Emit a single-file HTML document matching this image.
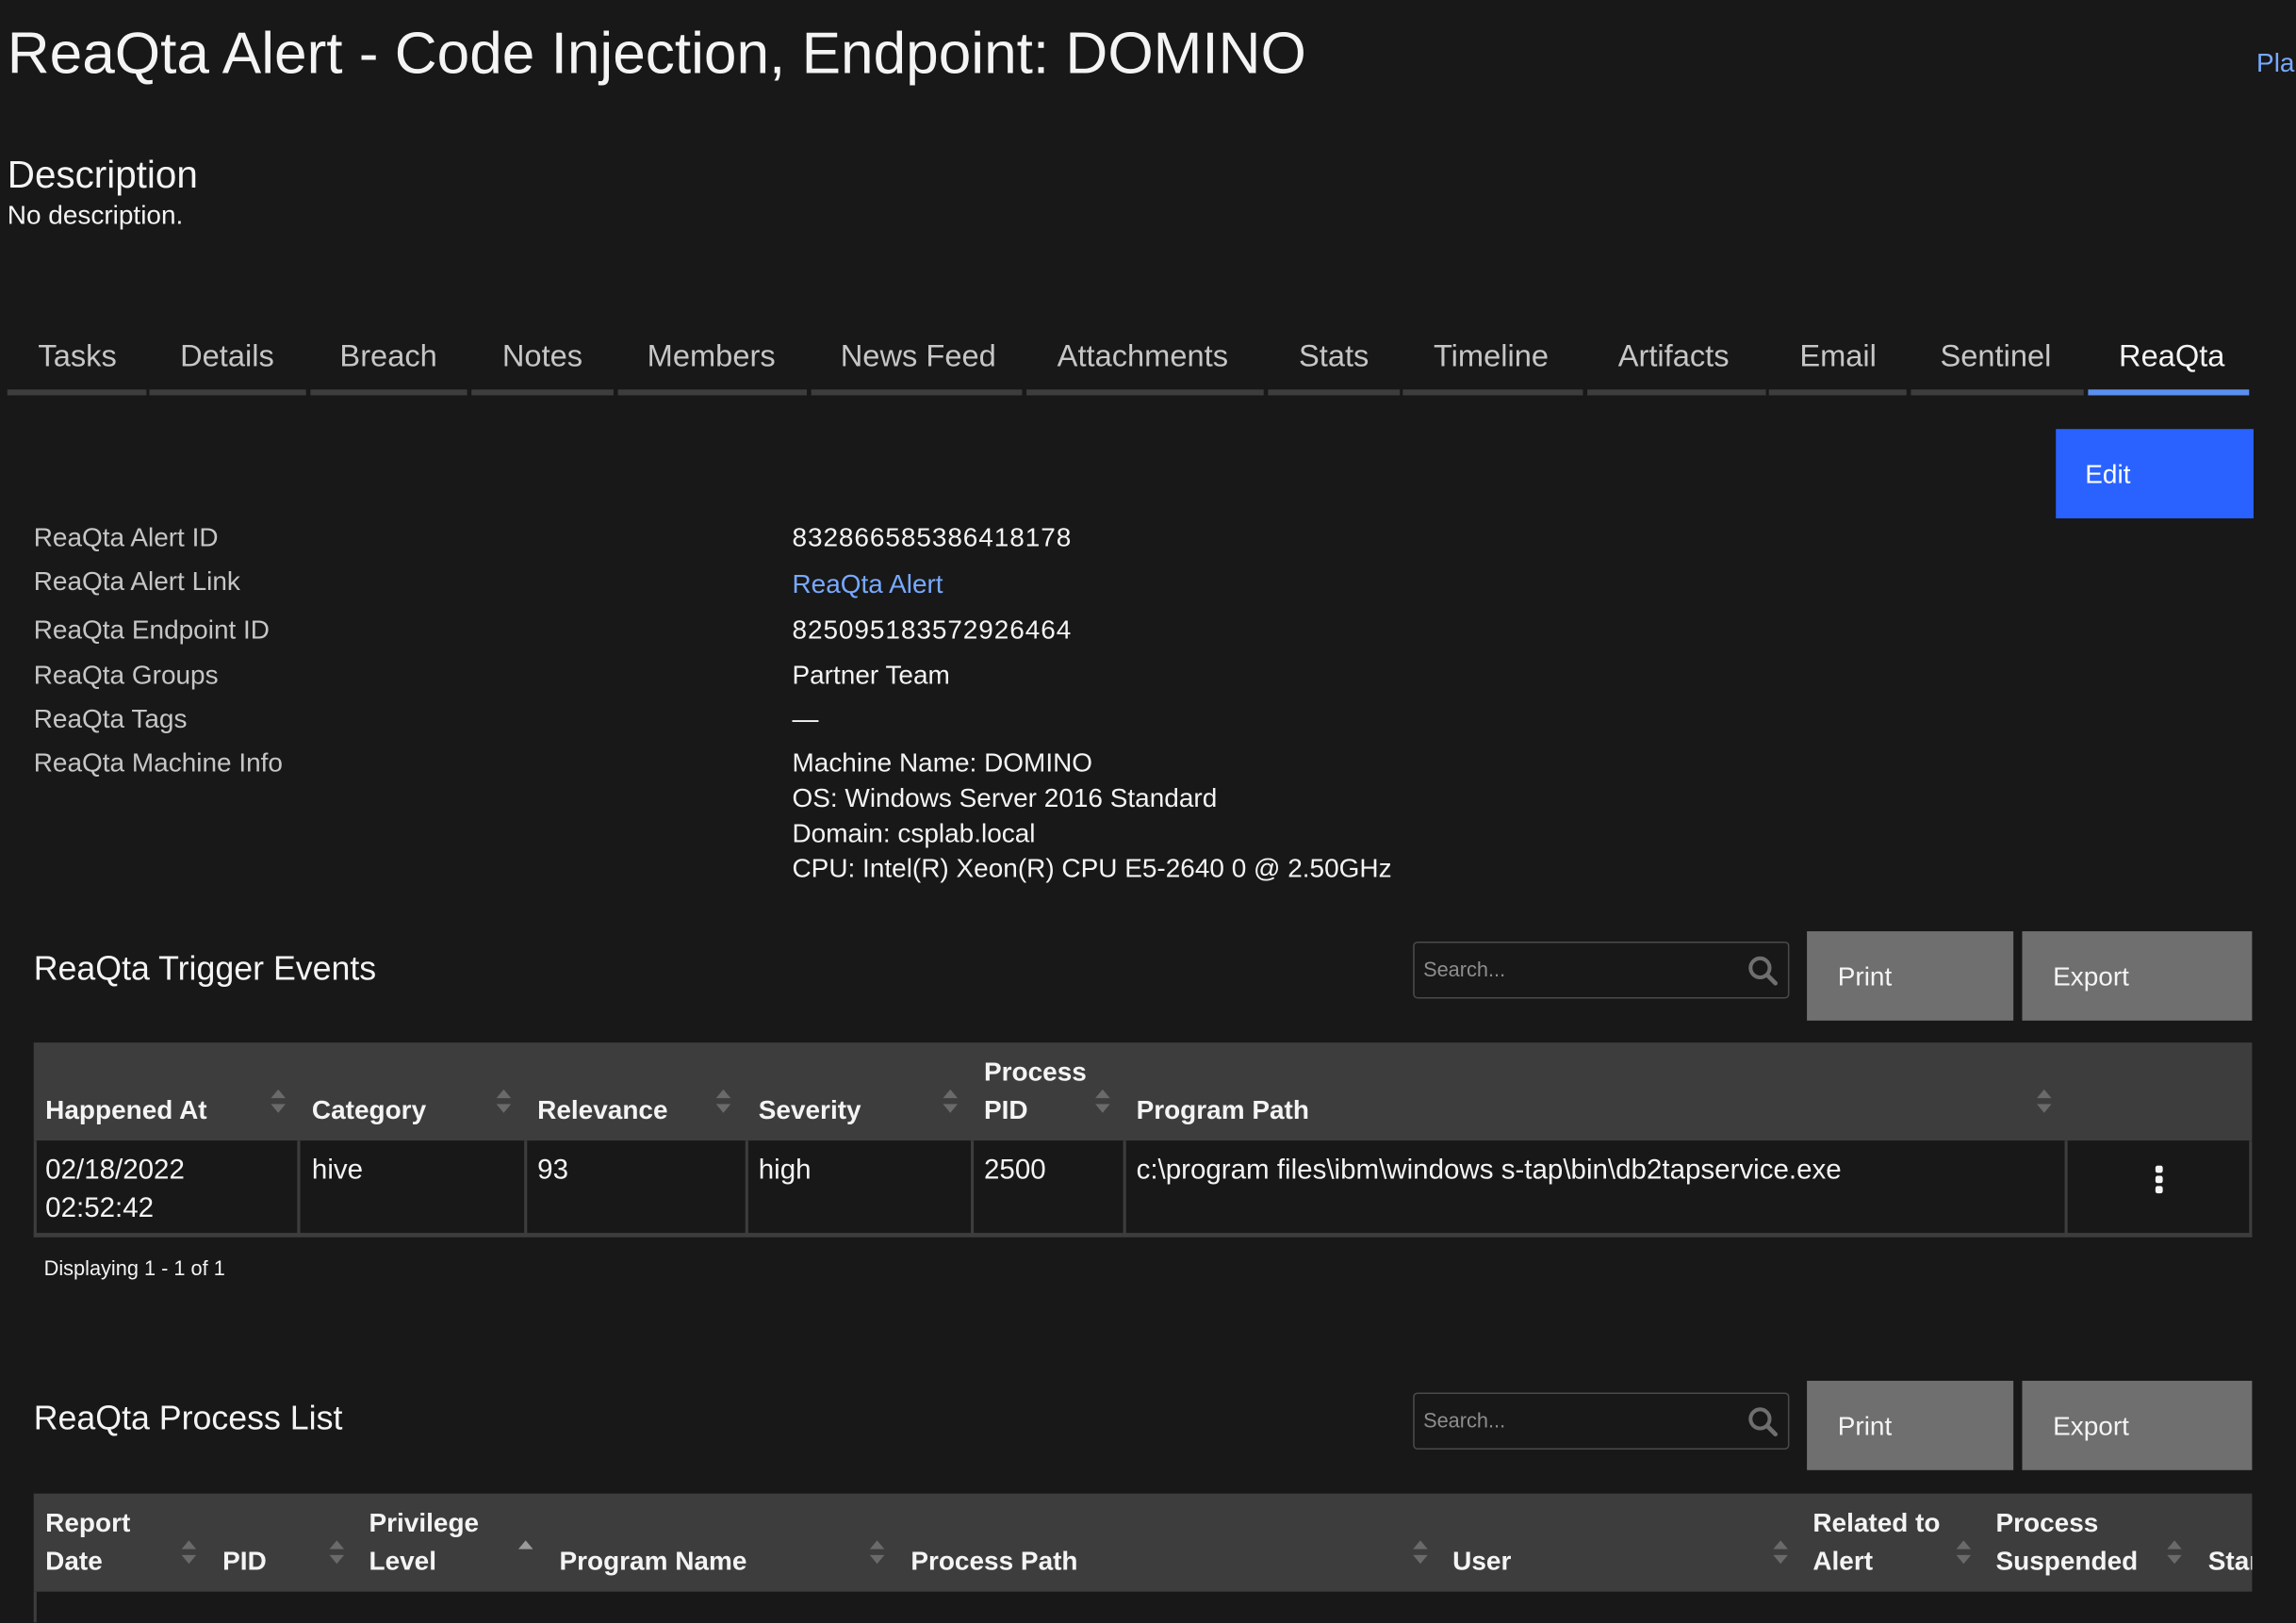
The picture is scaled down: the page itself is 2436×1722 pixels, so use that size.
<!DOCTYPE html>
<html><head><meta charset="utf-8"><style>
html,body{margin:0;padding:0;background:#181818;overflow:hidden}
body{width:2436px;height:1722px}
#w{position:absolute;left:0;top:0;width:1568px;height:1108px;transform:scale(1.553571);transform-origin:0 0;font-family:"Liberation Sans",sans-serif;color:#f4f4f4}
.t{position:absolute;white-space:nowrap;line-height:1}
.b{position:absolute}
.lbl{color:#c6c6c6;font-size:18px}
.val{color:#f4f4f4;font-size:18px}
.tab{color:#c6c6c6;font-size:21px}
.th{font-weight:bold;font-size:18px;color:#f4f4f4}
.td{font-size:19px;color:#f4f4f4}
.seg{position:absolute;top:266px;height:4px;background:#3d3d3d}
.btn{position:absolute;background:#6f6f6f;color:#f4f4f4;font-size:17px}
.srch{position:absolute;border:1px solid #4a4a4a;border-radius:3px;background:#181818}
.s{position:absolute;width:10px;height:17px}
</style></head><body><div id="w">
<div class="t" style="left:5px;top:17px;font-size:40px;color:#f4f4f4">ReaQta Alert - Code Injection, Endpoint: DOMINO</div>
<div class="t" style="left:1541px;top:34px;font-size:18px;color:#78a9ff">Plan</div>
<div class="t" style="left:5px;top:106px;font-size:26px">Description</div>
<div class="t" style="left:5px;top:138px;font-size:18px">No description.</div>

<div class="t tab" style="left:26px;top:233px">Tasks</div>
<div class="t tab" style="left:123px;top:233px">Details</div>
<div class="t tab" style="left:232px;top:233px">Breach</div>
<div class="t tab" style="left:343px;top:233px">Notes</div>
<div class="t tab" style="left:442px;top:233px">Members</div>
<div class="t tab" style="left:574px;top:233px">News Feed</div>
<div class="t tab" style="left:722px;top:233px">Attachments</div>
<div class="t tab" style="left:887px;top:233px">Stats</div>
<div class="t tab" style="left:979px;top:233px">Timeline</div>
<div class="t tab" style="left:1105px;top:233px">Artifacts</div>
<div class="t tab" style="left:1229px;top:233px">Email</div>
<div class="t tab" style="left:1325px;top:233px">Sentinel</div>
<div class="t tab" style="left:1447px;top:233px;color:#f4f4f4">ReaQta</div>
<div class="seg" style="left:5px;width:95px"></div>
<div class="seg" style="left:102px;width:107px"></div>
<div class="seg" style="left:212px;width:107px"></div>
<div class="seg" style="left:322px;width:97px"></div>
<div class="seg" style="left:422px;width:129px"></div>
<div class="seg" style="left:554px;width:144px"></div>
<div class="seg" style="left:701px;width:162px"></div>
<div class="seg" style="left:866px;width:90px"></div>
<div class="seg" style="left:958px;width:123px"></div>
<div class="seg" style="left:1084px;width:122px"></div>
<div class="seg" style="left:1208px;width:94px"></div>
<div class="seg" style="left:1305px;width:118px"></div>
<div class="seg" style="left:1426px;width:110px;background:#5a8ff0"></div>

<div class="b" style="left:1404px;top:293px;width:135px;height:61px;background:#2962ff"></div>
<div class="t" style="left:1424px;top:315px;font-size:18px;color:#fff">Edit</div>

<div class="t lbl" style="left:23px;top:358px">ReaQta Alert ID</div>
<div class="t lbl" style="left:23px;top:388px">ReaQta Alert Link</div>
<div class="t lbl" style="left:23px;top:421px">ReaQta Endpoint ID</div>
<div class="t lbl" style="left:23px;top:452px">ReaQta Groups</div>
<div class="t lbl" style="left:23px;top:482px">ReaQta Tags</div>
<div class="t lbl" style="left:23px;top:512px">ReaQta Machine Info</div>
<div class="t val" style="left:541px;top:358px;letter-spacing:0.6px">832866585386418178</div>
<div class="t val" style="left:541px;top:390px;color:#78a9ff">ReaQta Alert</div>
<div class="t val" style="left:541px;top:421px;letter-spacing:0.6px">825095183572926464</div>
<div class="t val" style="left:541px;top:452px">Partner Team</div>
<div class="t val" style="left:541px;top:482px">—</div>
<div class="t val" style="left:541px;top:512px">Machine Name: DOMINO</div>
<div class="t val" style="left:541px;top:536px">OS: Windows Server 2016 Standard</div>
<div class="t val" style="left:541px;top:560px">Domain: csplab.local</div>
<div class="t val" style="left:541px;top:584px">CPU: Intel(R) Xeon(R) CPU E5-2640 0 @ 2.50GHz</div>

<!-- Trigger events -->
<div class="t" style="left:23px;top:650px;font-size:23px">ReaQta Trigger Events</div>
<div class="srch" style="left:965px;top:643px;width:255px;height:37px"></div>
<div class="t" style="left:972px;top:655px;font-size:14px;color:#8d8d8d">Search...</div>
<svg class="b" style="left:1193px;top:652px" width="22" height="22" viewBox="0 0 22 22"><circle cx="9" cy="9" r="6.5" fill="none" stroke="#6f6f6f" stroke-width="2.6"/><path d="M14 14 L19.5 19.5" stroke="#6f6f6f" stroke-width="3" stroke-linecap="round"/></svg>
<div class="btn" style="left:1234px;top:636px;width:141px;height:61px"></div>
<div class="t" style="left:1255px;top:658px;font-size:18px">Print</div>
<div class="btn" style="left:1381px;top:636px;width:157px;height:61px"></div>
<div class="t" style="left:1402px;top:658px;font-size:18px">Export</div>

<div class="b" style="left:23px;top:712px;width:1515px;height:67px;background:#3d3d3d"></div>
<div class="b" style="left:23px;top:779px;width:1515px;height:66px;background:#181818;box-sizing:border-box;border-left:2px solid #3d3d3d;border-right:2px solid #3d3d3d;border-bottom:3px solid #3d3d3d"></div>
<div class="b" style="left:203px;top:779px;width:2px;height:66px;background:#3d3d3d"></div>
<div class="b" style="left:358px;top:779px;width:2px;height:66px;background:#3d3d3d"></div>
<div class="b" style="left:509px;top:779px;width:2px;height:66px;background:#3d3d3d"></div>
<div class="b" style="left:663px;top:779px;width:2px;height:66px;background:#3d3d3d"></div>
<div class="b" style="left:767px;top:779px;width:2px;height:66px;background:#3d3d3d"></div>
<div class="b" style="left:1410px;top:779px;width:2px;height:66px;background:#3d3d3d"></div>

<div class="t th" style="left:31px;top:749px">Happened At</div>
<div class="t th" style="left:213px;top:749px">Category</div>
<div class="t th" style="left:367px;top:749px">Relevance</div>
<div class="t th" style="left:518px;top:749px">Severity</div>
<div class="t th" style="left:672px;top:723px">Process</div>
<div class="t th" style="left:672px;top:749px">PID</div>
<div class="t th" style="left:776px;top:749px">Program Path</div>
<svg class="s" style="left:185px;top:744px" viewBox="0 0 10 17"><path d="M5 0 L10 6 L0 6Z M0 10 L10 10 L5 16Z" fill="#6a6a6a"/></svg>
<svg class="s" style="left:339px;top:744px" viewBox="0 0 10 17"><path d="M5 0 L10 6 L0 6Z M0 10 L10 10 L5 16Z" fill="#6a6a6a"/></svg>
<svg class="s" style="left:489px;top:744px" viewBox="0 0 10 17"><path d="M5 0 L10 6 L0 6Z M0 10 L10 10 L5 16Z" fill="#6a6a6a"/></svg>
<svg class="s" style="left:644px;top:744px" viewBox="0 0 10 17"><path d="M5 0 L10 6 L0 6Z M0 10 L10 10 L5 16Z" fill="#6a6a6a"/></svg>
<svg class="s" style="left:748px;top:744px" viewBox="0 0 10 17"><path d="M5 0 L10 6 L0 6Z M0 10 L10 10 L5 16Z" fill="#6a6a6a"/></svg>
<svg class="s" style="left:1391px;top:744px" viewBox="0 0 10 17"><path d="M5 0 L10 6 L0 6Z M0 10 L10 10 L5 16Z" fill="#6a6a6a"/></svg>

<div class="t td" style="left:31px;top:790px">02/18/2022</div>
<div class="t td" style="left:31px;top:816px">02:52:42</div>
<div class="t td" style="left:213px;top:790px">hive</div>
<div class="t td" style="left:367px;top:790px">93</div>
<div class="t td" style="left:518px;top:790px">high</div>
<div class="t td" style="left:672px;top:790px">2500</div>
<div class="t td" style="left:776px;top:790px">c:\program files\ibm\windows s-tap\bin\db2tapservice.exe</div>
<svg class="b" style="left:1471px;top:796px" width="8" height="20" viewBox="0 0 8 20"><rect x="1" y="0" width="5" height="5" rx="1.5" fill="#f4f4f4"/><rect x="1" y="7" width="5" height="5" rx="1.5" fill="#f4f4f4"/><rect x="1" y="14" width="5" height="5" rx="1.5" fill="#f4f4f4"/></svg>
<div class="t" style="left:30px;top:859px;font-size:14px">Displaying 1 - 1 of 1</div>

<!-- Process list -->
<div class="t" style="left:23px;top:957px;font-size:23px">ReaQta Process List</div>
<div class="srch" style="left:965px;top:951px;width:255px;height:37px"></div>
<div class="t" style="left:972px;top:963px;font-size:14px;color:#8d8d8d">Search...</div>
<svg class="b" style="left:1193px;top:960px" width="22" height="22" viewBox="0 0 22 22"><circle cx="9" cy="9" r="6.5" fill="none" stroke="#6f6f6f" stroke-width="2.6"/><path d="M14 14 L19.5 19.5" stroke="#6f6f6f" stroke-width="3" stroke-linecap="round"/></svg>
<div class="btn" style="left:1234px;top:943px;width:141px;height:61px"></div>
<div class="t" style="left:1255px;top:965px;font-size:18px">Print</div>
<div class="btn" style="left:1381px;top:943px;width:157px;height:61px"></div>
<div class="t" style="left:1402px;top:965px;font-size:18px">Export</div>

<div class="b" style="left:23px;top:1020px;width:1515px;height:67px;background:#3d3d3d;overflow:hidden">
<div class="t th" style="left:8px;top:11px">Report</div>
<div class="t th" style="left:8px;top:37px">Date</div>
<div class="t th" style="left:129px;top:37px">PID</div>
<div class="t th" style="left:229px;top:11px">Privilege</div>
<div class="t th" style="left:229px;top:37px">Level</div>
<div class="t th" style="left:359px;top:37px">Program Name</div>
<div class="t th" style="left:599px;top:37px">Process Path</div>
<div class="t th" style="left:969px;top:37px">User</div>
<div class="t th" style="left:1215px;top:11px">Related to</div>
<div class="t th" style="left:1215px;top:37px">Alert</div>
<div class="t th" style="left:1340px;top:11px">Process</div>
<div class="t th" style="left:1340px;top:37px">Suspended</div>
<div class="t th" style="left:1485px;top:37px">Start</div>
<svg class="s" style="left:101px;top:32px" viewBox="0 0 10 17"><path d="M5 0 L10 6 L0 6Z M0 10 L10 10 L5 16Z" fill="#6a6a6a"/></svg>
<svg class="s" style="left:202px;top:32px" viewBox="0 0 10 17"><path d="M5 0 L10 6 L0 6Z M0 10 L10 10 L5 16Z" fill="#6a6a6a"/></svg>
<svg class="s" style="left:331px;top:32px" viewBox="0 0 10 17"><path d="M5 0 L10 6 L0 6Z" fill="#9a9a9a"/></svg>
<svg class="s" style="left:571px;top:32px" viewBox="0 0 10 17"><path d="M5 0 L10 6 L0 6Z M0 10 L10 10 L5 16Z" fill="#6a6a6a"/></svg>
<svg class="s" style="left:942px;top:32px" viewBox="0 0 10 17"><path d="M5 0 L10 6 L0 6Z M0 10 L10 10 L5 16Z" fill="#6a6a6a"/></svg>
<svg class="s" style="left:1188px;top:32px" viewBox="0 0 10 17"><path d="M5 0 L10 6 L0 6Z M0 10 L10 10 L5 16Z" fill="#6a6a6a"/></svg>
<svg class="s" style="left:1313px;top:32px" viewBox="0 0 10 17"><path d="M5 0 L10 6 L0 6Z M0 10 L10 10 L5 16Z" fill="#6a6a6a"/></svg>
<svg class="s" style="left:1457px;top:32px" viewBox="0 0 10 17"><path d="M5 0 L10 6 L0 6Z M0 10 L10 10 L5 16Z" fill="#6a6a6a"/></svg>
</div>
<div class="b" style="left:23px;top:1087px;width:2px;height:21px;background:#3d3d3d"></div>
</div></body></html>
